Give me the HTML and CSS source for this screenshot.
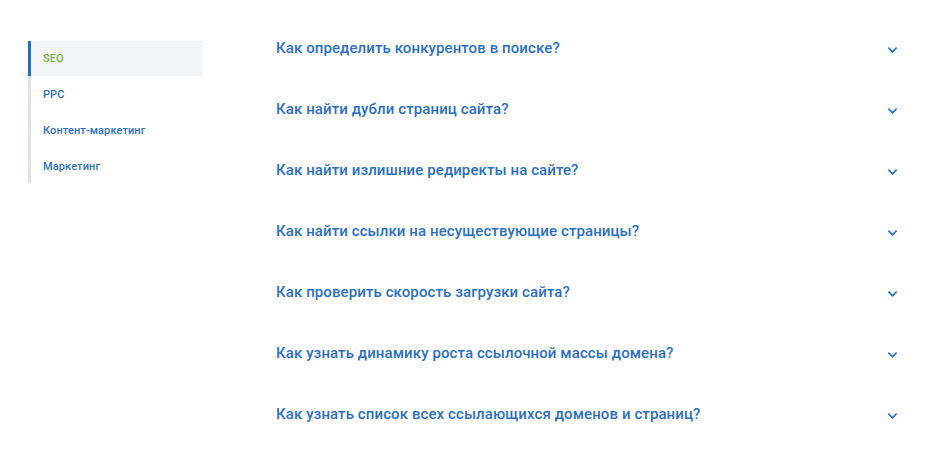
FILE: index.html
```html
<!DOCTYPE html>
<html lang="ru">
<head>
<meta charset="utf-8">
<link rel="stylesheet" href="styles.css">
</head>
<body>
<div class="page">
  <nav class="side">
    <a class="side-item active">SEO</a>
    <a class="side-item">PPC</a>
    <a class="side-item">Контент-маркетинг</a>
    <a class="side-item">Маркетинг</a>
  </nav>
  <div class="faq">
    <div class="q"><span>Как определить конкурентов в поиске?</span><svg class="chev" viewBox="0 0 10 6"><path d="M1 1l4 4 4-4"/></svg></div>
    <div class="q"><span>Как найти дубли страниц сайта?</span><svg class="chev" viewBox="0 0 10 6"><path d="M1 1l4 4 4-4"/></svg></div>
    <div class="q"><span>Как найти излишние редиректы на сайте?</span><svg class="chev" viewBox="0 0 10 6"><path d="M1 1l4 4 4-4"/></svg></div>
    <div class="q"><span>Как найти ссылки на несуществующие страницы?</span><svg class="chev" viewBox="0 0 10 6"><path d="M1 1l4 4 4-4"/></svg></div>
    <div class="q"><span>Как проверить скорость загрузки сайта?</span><svg class="chev" viewBox="0 0 10 6"><path d="M1 1l4 4 4-4"/></svg></div>
    <div class="q"><span>Как узнать динамику роста ссылочной массы домена?</span><svg class="chev" viewBox="0 0 10 6"><path d="M1 1l4 4 4-4"/></svg></div>
    <div class="q"><span>Как узнать список всех ссылающихся доменов и страниц?</span><svg class="chev" viewBox="0 0 10 6"><path d="M1 1l4 4 4-4"/></svg></div>
  </div>
</div>
</body>
</html>
```
FILE: styles.css
```css
html, body { margin: 0; padding: 0; background: #fff; }
body { font-family: Roboto, "Liberation Sans", sans-serif; }
.page {
  display: flex;
  padding: 18px 0 0 28px;
}
.side {
  width: 172px;
  margin-top: 23px;
  border-left: 3px solid #dbe2ee;
  display: flex;
  flex-direction: column;
  align-self: flex-start;
}
.side-item {
  display: block;
  height: 36px;
  line-height: 35px;
  padding-left: 12px;
  font-size: 11px;
  font-weight: 500;
  letter-spacing: 0.1px;
  color: #2c6fbf;
  margin-left: -3px;
  border-left: 3px solid transparent;
}
.side-item:last-child { height: 34px; }
.side-item.active {
  background: #f2f4f8;
  color: #7cb342;
  border-left-color: #1f6fc5;
  height: 35px;
  margin-bottom: 1px;
}
.faq {
  margin-left: 73px;
  width: 621px;
  display: flex;
  flex-direction: column;
}
.q {
  display: flex;
  align-items: center;
  justify-content: space-between;
  height: 61px;
  font-size: 15px;
  font-weight: 500;
  letter-spacing: 0.1px;
  color: #2c6fbf;
}
.q span { position: relative; top: -0.5px; }
.chev {
  width: 9px;
  height: 6px;
  fill: none;
  stroke: #2c78d0;
  stroke-width: 2;
  stroke-linecap: round;
  stroke-linejoin: round;
  position: relative;
  top: 1px;
}
```
